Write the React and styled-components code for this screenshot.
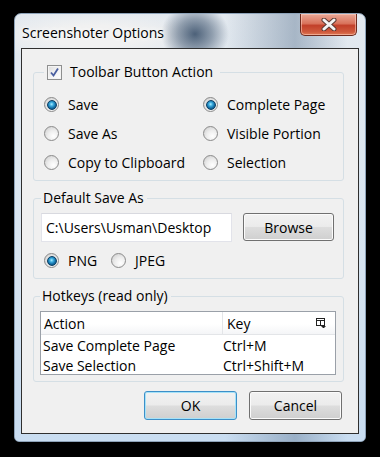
import React from 'react'
import styled, { createGlobalStyle } from 'styled-components'

const GlobalStyle = createGlobalStyle`
    html, body {
        margin: 0;
        padding: 0;
        background: #000;
    }
    body {
        font-family: "Open Sans", "Noto Sans", sans-serif;
        font-size: 14px;
        color: #000;
    }
`

const Screen = styled.div`
    width: 380px;
    height: 457px;
    box-sizing: border-box;
    padding: 13px 0 0 14px;
    background: #000;
`

const Window = styled.div`
    width: 352px;
    height: 429px;
    box-sizing: border-box;
    display: flex;
    flex-direction: column;
    padding: 0 6px 7px;
    border: 1px solid #8ea3b9;
    border-radius: 7px 7px 5px 5px;
    background:
        radial-gradient(ellipse 34px 30px at 180px 20px, rgba(60, 82, 108, 0.9) 0%, rgba(60, 82, 108, 0.5) 50%, rgba(60, 82, 108, 0) 100%),
        radial-gradient(ellipse 110px 26px at 80px 22px, #f1f1f1 40%, rgba(241, 241, 241, 0) 100%),
        linear-gradient(90deg, rgba(0, 0, 0, 0) 60%, rgba(95, 120, 148, 0.45) 80%, rgba(0, 0, 0, 0) 95%),
        linear-gradient(180deg, #e3e9ef 0%, #d6e4f1 60%, #c9ddf1 100%);
`

const TitleBar = styled.div`
    height: 34px;
    display: flex;
    justify-content: space-between;
    align-items: flex-start;
`

const Title = styled.div`
    padding: 9px 0 0 1px;
    font-size: 14px;
    line-height: 20px;
    text-shadow: 0 0 10px #fff, 0 0 6px #fff;
`

const CloseButton = styled.div`
    width: 57px;
    height: 22px;
    margin-right: 2px;
    box-sizing: border-box;
    display: flex;
    align-items: center;
    justify-content: center;
    border: 1px solid #6e2a1e;
    border-top: none;
    border-radius: 0 0 5px 5px;
    background: linear-gradient(180deg, #e9a897 0%, #d9735c 45%, #c2402a 55%, #cf5a3d 85%, #e07a55 100%);
    box-shadow: inset 0 0 0 1px rgba(255, 210, 195, 0.55);
`

const Client = styled.div`
    flex: 1;
    display: flex;
    flex-direction: column;
    padding: 14px 14px 12px 11px;
    border: 1px solid #2f2f2f;
    background: #f0f0f0;
`

const Group = styled.fieldset`
    margin: ${p => p.$top}px 0 0;
    padding: 0 8px ${p => p.$bottom}px ${p => p.$left}px;
    min-width: 0;
    border: 1px solid #d5dfe5;
    border-radius: 3px;
`

const Legend = styled.legend`
    display: flex;
    align-items: center;
    gap: 8px;
    height: 18px;
    padding: 0 ${p => p.$right}px 0 ${p => p.$pad}px;
    line-height: 18px;
`

const CheckBox = styled.span`
    width: 13px;
    height: 13px;
    display: flex;
    align-items: center;
    justify-content: center;
    border: 1px solid #8e8f8f;
    background: linear-gradient(135deg, #dcdcdc 0%, #f4f4f4 55%, #fff 100%);
    box-shadow: inset 0 0 0 1px #f4f4f4;
`

const RadioGrid = styled.div`
    display: grid;
    grid-template-columns: ${p => p.$cols};
    grid-auto-rows: 29px;
    padding: ${p => p.$top}px 0 0 ${p => p.$left}px;
`

const RadioItem = styled.label`
    display: flex;
    align-items: center;
    gap: 9px;
`

const RadioCircle = styled.span`
    width: 13px;
    height: 13px;
    display: flex;
    align-items: center;
    justify-content: center;
    border: 1px solid #8a8a8a;
    border-radius: 50%;
    background: radial-gradient(circle at 65% 70%, #ffffff 0%, #ededed 45%, #c9c9c9 100%);
`

const RadioDot = styled.span`
    width: 8px;
    height: 8px;
    border-radius: 50%;
    border: 0.5px solid #0c3f63;
    background: radial-gradient(circle at 45% 40%, #a9ecff 0%, #39a9dc 30%, #136ca3 60%, #0a4068 100%);
`

const SaveRow = styled.div`
    display: flex;
    align-items: flex-start;
    gap: 11px;
    padding-top: 6px;
`

const PathInput = styled.input`
    width: 191px;
    height: 29px;
    box-sizing: border-box;
    margin: 0;
    padding: 0 4px;
    border: 1px solid #e2e3ea;
    border-top-color: #d8d9df;
    background: #fff;
    font: inherit;
    color: #000;
    outline: none;
`

const Button = styled.div`
    width: ${p => p.$w}px;
    height: ${p => p.$h}px;
    box-sizing: border-box;
    display: flex;
    align-items: center;
    justify-content: center;
    border: 1px solid ${p => (p.$default ? '#3c8fc8' : '#707070')};
    border-radius: 3px;
    background: linear-gradient(180deg, #f2f2f2 0%, #ebebeb 48%, #dddddd 52%, #cfcfcf 100%);
    box-shadow: inset 0 0 0 1px ${p => (p.$default ? '#a6e2f8' : '#fbfbfb')};
`

const HotkeyList = styled.div`
    width: 296px;
    height: 64px;
    box-sizing: border-box;
    margin-top: 6px;
    border: 1px solid #9aa0a8;
    background: #fff;
`

const ListHeader = styled.div`
    display: grid;
    grid-template-columns: 181px 1fr 20px;
    height: 22px;
    border-bottom: 1px solid #e3e5e8;
    background: linear-gradient(180deg, #ffffff 0%, #ffffff 55%, #f4f5f7 100%);
`

const HeaderCell = styled.div`
    display: flex;
    align-items: center;
    padding-left: ${p => p.$pad}px;
    border-left: ${p => (p.$divider ? '1px solid #e3e5e8' : 'none')};
`

const ListRow = styled.div`
    display: grid;
    grid-template-columns: 181px 1fr;
    height: 20px;
    line-height: 22px;
`

const Cell = styled.div`
    padding-left: ${p => p.$pad}px;
    white-space: nowrap;
`

const Footer = styled.div`
    display: flex;
    justify-content: flex-end;
    gap: 12px;
    margin-top: 9px;
    padding-right: 2px;
`

const Radio = ({ checked, children }) => (
    <RadioItem>
        <RadioCircle>{checked && <RadioDot />}</RadioCircle>
        {children}
    </RadioItem>
)

const CloseGlyph = () => (
    <svg width="16" height="13" viewBox="0 0 16 13">
        <path d="M3 2 L13 11 M13 2 L3 11" stroke="#5b3a34" strokeWidth="5" strokeLinecap="round" />
        <path d="M3 2 L13 11 M13 2 L3 11" stroke="#f4f4f4" strokeWidth="3" strokeLinecap="round" />
    </svg>
)

const CheckGlyph = () => (
    <svg width="11" height="11" viewBox="0 0 11 11">
        <path d="M2 5.5 L4.5 8.5 L9 1.5" fill="none" stroke="#4a5fa0" strokeWidth="1.8" />
    </svg>
)

const ColumnsGlyph = () => (
    <svg width="10" height="10" viewBox="0 0 10 10">
        <rect x="0.5" y="0.5" width="8" height="7" fill="none" stroke="#222" />
        <path d="M0.5 2.5 H8.5 M4.5 2.5 V7.5" stroke="#222" />
        <path d="M5 8 H10 L7.5 10.5 Z" fill="#222" />
    </svg>
)

const App = () => {
    return (
        <Screen>
            <GlobalStyle />
            <Window>
                <TitleBar>
                    <Title>Screenshoter Options</Title>
                    <CloseButton>
                        <CloseGlyph />
                    </CloseButton>
                </TitleBar>
                <Client>
                    <Group $top={0} $left={10} $bottom={3}>
                        <Legend $pad={3} $right={7}>
                            <CheckBox>
                                <CheckGlyph />
                            </CheckBox>
                            Toolbar Button Action
                        </Legend>
                        <RadioGrid $cols="159px 1fr" $top={9} $left={0}>
                            <Radio checked>Save</Radio>
                            <Radio checked>Complete Page</Radio>
                            <Radio>Save As</Radio>
                            <Radio>Visible Portion</Radio>
                            <Radio>Copy to Clipboard</Radio>
                            <Radio>Selection</Radio>
                        </RadioGrid>
                    </Group>

                    <Group $top={8} $left={7} $bottom={3}>
                        <Legend $pad={2} $right={3}>Default Save As</Legend>
                        <SaveRow>
                            <PathInput readOnly value="C:\Users\Usman\Desktop" />
                            <Button $w={91} $h={28}>Browse</Button>
                        </SaveRow>
                        <RadioGrid $cols="67px 1fr" $top={4} $left={3}>
                            <Radio checked>PNG</Radio>
                            <Radio>JPEG</Radio>
                        </RadioGrid>
                    </Group>

                    <Group $top={8} $left={6} $bottom={6}>
                        <Legend $pad={2} $right={3}>Hotkeys (read only)</Legend>
                        <HotkeyList>
                            <ListHeader>
                                <HeaderCell $pad={3}>Action</HeaderCell>
                                <HeaderCell $pad={4} $divider>Key</HeaderCell>
                                <HeaderCell $pad={1}>
                                    <ColumnsGlyph />
                                </HeaderCell>
                            </ListHeader>
                            <ListRow>
                                <Cell $pad={2}>Save Complete Page</Cell>
                                <Cell $pad={1}>Ctrl+M</Cell>
                            </ListRow>
                            <ListRow>
                                <Cell $pad={2}>Save Selection</Cell>
                                <Cell $pad={1}>Ctrl+Shift+M</Cell>
                            </ListRow>
                        </HotkeyList>
                    </Group>

                    <Footer>
                        <Button $w={93} $h={29} $default>OK</Button>
                        <Button $w={93} $h={29}>Cancel</Button>
                    </Footer>
                </Client>
            </Window>
        </Screen>
    )
}

export default App
